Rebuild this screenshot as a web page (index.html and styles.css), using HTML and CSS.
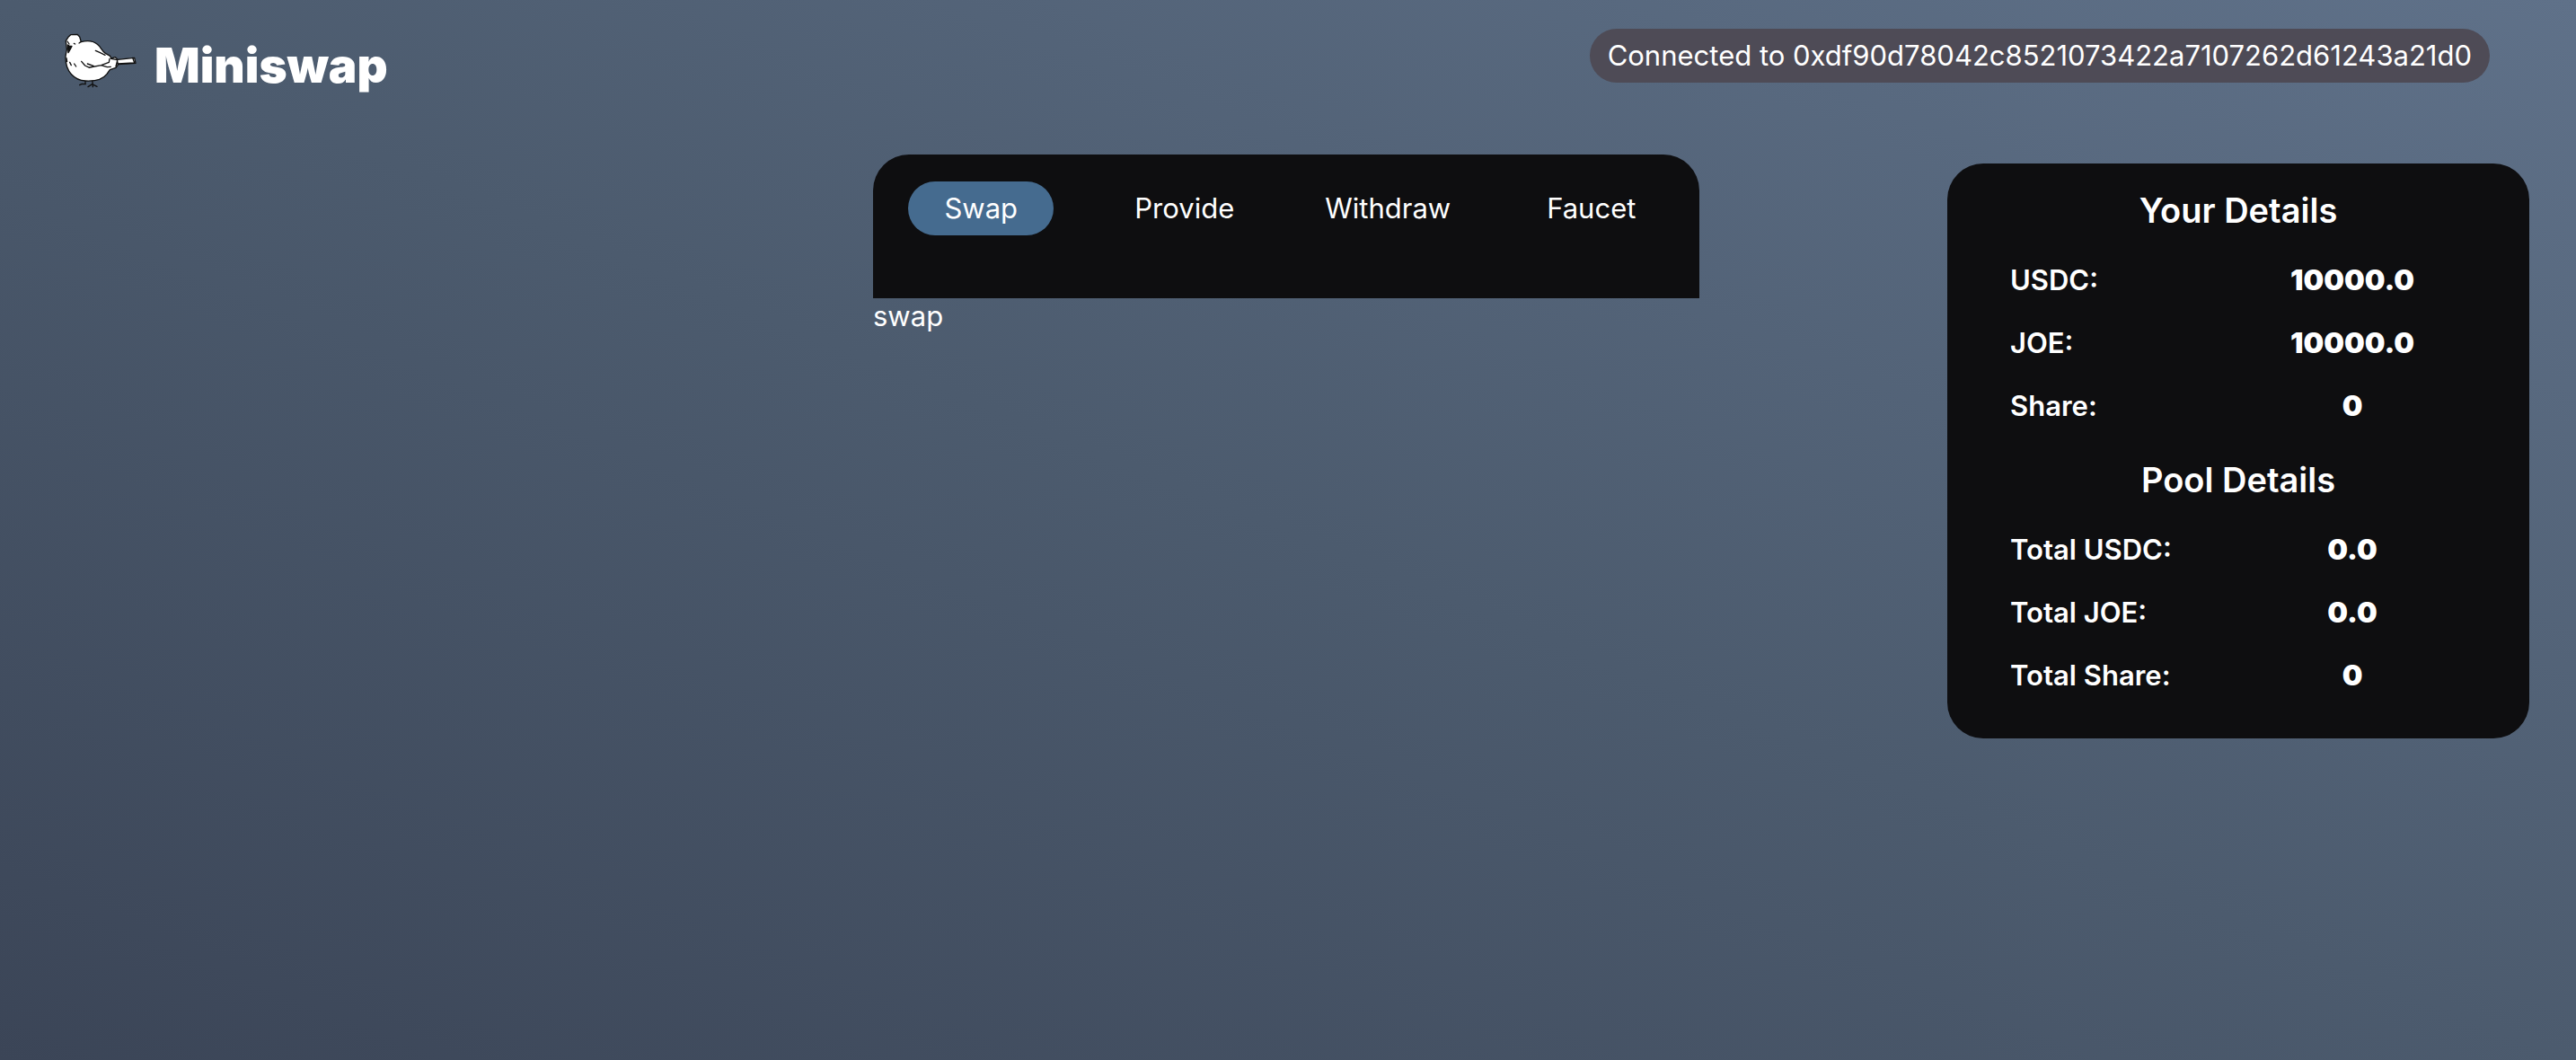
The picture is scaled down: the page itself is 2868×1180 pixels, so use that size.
FILE: index.html
```
<!DOCTYPE html>
<html lang="en">
<head>
    <meta charset="UTF-8">
    <meta name="viewport" content="width=device-width, initial-scale=1.0">
    <title>Miniswap</title>
    <link rel="stylesheet" href="styles.css">
</head>
<body>
    <header class="navbar">
        <div class="brand">
            <svg class="logo" viewBox="0 0 330 255" role="img" aria-label="Bird">
                <path class="line" d="M105 188v20M86 212l8-4 12 1M127 188l3 22M114 218l14-9 16 8M130 209v9"/>
                <path class="body" d="M48 52l8-8 22-1 8 8 5 17c20-5 42-2 54 8 13 10 15 22 27 30l16 9 3 8 14-4 8 8 56-6 4 18-58 4-8 11-20 7-10 14c-12 16-38 25-72 23-36-2-66-30-66-78 0-12 4-20 4-28l-3-28z"/>
                <path class="line" d="M139 97l14 6 18 9M186 124l-2 12-26 10-38 7M92 133l12 14 15 7M112 141l20 7M158 146l20 6 12-1M191 124l20 4 3 15M212 130l-5 20M53 136l5 10M68 141l6 9M42 122l2 12"/>
                <path class="line" d="M263 121l6 16M214 141l54-3M90 68l-6 4"/>
                <path class="beak" d="M46 78l6 4 8 0-5 10-7 12-1-14zM45 66l6 9M67 73l4 2"/>
            </svg>
            <h1 class="title">Miniswap</h1>
        </div>
        <div class="wallet">Connected to 0xdf90d78042c8521073422a7107262d61243a21d0</div>
    </header>

    <main class="content">
        <section class="exchange">
            <nav class="tabs">
                <button type="button" class="tab active">Swap</button>
                <button type="button" class="tab">Provide</button>
                <button type="button" class="tab">Withdraw</button>
                <button type="button" class="tab">Faucet</button>
            </nav>
            <div class="panel">swap</div>
        </section>

        <aside class="details">
            <h2>Your Details</h2>
            <table>
                <tr><th scope="row">USDC:</th><td>10000.0</td></tr>
                <tr><th scope="row">JOE:</th><td>10000.0</td></tr>
                <tr><th scope="row">Share:</th><td>0</td></tr>
            </table>
            <h2>Pool Details</h2>
            <table>
                <tr><th scope="row">Total USDC:</th><td>0.0</td></tr>
                <tr><th scope="row">Total JOE:</th><td>0.0</td></tr>
                <tr><th scope="row">Total Share:</th><td>0</td></tr>
            </table>
        </aside>
    </main>
</body>
</html>
```
FILE: styles.css
```
* {
    box-sizing: border-box;
}
body {
    margin: 0;
    min-height: 100vh;
    background: linear-gradient(to top right, #3b4557, #4c5b6e, #5f7189);
    color: white;
    font-family: Inter, sans-serif;
    font-size: 31px;
    line-height: 40px;
}
.navbar {
    display: flex;
    justify-content: space-between;
    align-items: flex-start;
    height: 172px;
    padding: 24px 96px 0 60px;
}
.brand {
    display: flex;
    align-items: center;
    gap: 2px;
}
.logo {
    width: 110px;
    height: 85px;
    stroke: #111;
    stroke-width: 4;
    stroke-linecap: round;
    stroke-linejoin: round;
}
.logo .body {
    fill: white;
}
.logo .line {
    fill: none;
}
.logo .beak {
    fill: #111;
}
.title {
    margin: 12px 0 0;
    font-size: 53px;
    font-weight: 900;
    line-height: 72px;
}
.wallet {
    margin-top: 8px;
    padding: 10px 20px;
    border-radius: 30px;
    background: #4e4b56;
}
.content {
    display: grid;
    grid-template-columns: 1fr 920px 1fr;
    align-items: start;
    padding-right: 4px;
}
.exchange {
    grid-column: 2;
}
.tabs {
    display: grid;
    grid-template-columns: repeat(4, 1fr);
    justify-items: center;
    align-items: start;
    height: 160px;
    padding: 30px 7px 0;
    border-radius: 40px 40px 0 0;
    background: #0e0e10;
}
.tab {
    height: 60px;
    padding: 0 40px;
    border: none;
    border-radius: 30px;
    background: none;
    color: white;
    font: inherit;
    cursor: pointer;
}
.tab.active {
    background: #456b8f;
}
.details {
    justify-self: end;
    width: 648px;
    margin: 10px 48px 0 0;
    padding: 20px 70px;
    border-radius: 40px;
    background: #0e0e10;
}
.details h2 {
    margin: 0;
    font-size: 38px;
    font-weight: 600;
    line-height: 64px;
    text-align: center;
}
.details table {
    width: 100%;
    margin: 11px 0 15px;
    border-collapse: collapse;
    table-layout: fixed;
}
.details th,
.details td {
    height: 70px;
    padding: 0;
}
.details th {
    font-weight: 600;
    text-align: left;
}
.details td {
    font-size: 32px;
    font-weight: 900;
    text-align: center;
}
```
